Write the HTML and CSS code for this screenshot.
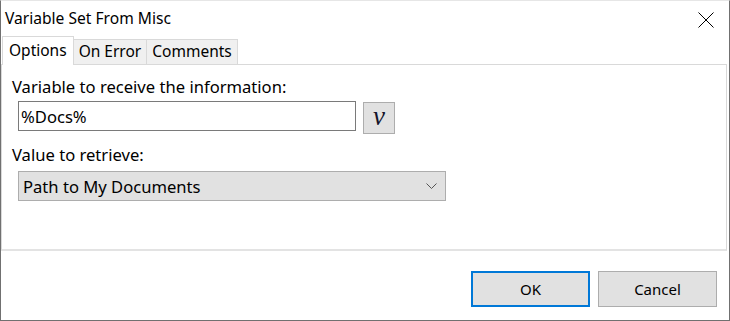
FILE: index.html
```html
<!DOCTYPE html>
<html>
	<head>
		<meta charset="UTF-8">
		<title>Variable Set From Misc</title>
		<link rel="stylesheet" href="styles.css">
	</head>
	<body>
		<div class="window flex-c">
			<header class="titlebar flex-r">
				<span class="title">Variable Set From Misc</span>
				<button class="close" type="button" aria-label="Close">
					<svg width="16" height="16" viewBox="0 0 16 16"><path d="M0.5 0.5 L15.5 15.5 M15.5 0.5 L0.5 15.5" stroke="#000" stroke-width="1" fill="none"/></svg>
				</button>
			</header>
			<nav class="tabs flex-r">
				<span class="tab active">Options</span>
				<span class="tab">On Error</span>
				<span class="tab">Comments</span>
			</nav>
			<main class="panel">
				<label class="caption" for="var">Variable to receive the information:</label>
				<div class="row flex-r">
					<input id="var" class="field" type="text" value="%Docs%">
					<button class="vbtn" type="button">v</button>
				</div>
				<label class="caption second" for="what">Value to retrieve:</label>
				<div class="select flex-r" id="what">
					<span>Path to My Documents</span>
					<svg width="11" height="6" viewBox="0 0 11 6"><path d="M0.5 0.5 L5.5 5.5 L10.5 0.5" stroke="#555" stroke-width="1" fill="none"/></svg>
				</div>
			</main>
			<footer class="buttons flex-r">
				<button class="btn default" type="button">OK</button>
				<button class="btn" type="button">Cancel</button>
			</footer>
		</div>
	</body>
</html>
```

FILE: styles.css
```css
* {
	font-family: "Noto Sans", sans-serif;
	box-sizing: border-box;
}
html, body {
	margin: 0;
	padding: 0;
	background: #fff;
}

.flex-r, .flex-c {
	display: flex;
	flex-wrap: nowrap;
}
.flex-r { flex-direction: row; }
.flex-c { flex-direction: column; }

.window {
	width: 730px;
	height: 321px;
	background: #fff;
	border: 1px solid #707070;
	border-top-color: #e6e6e6;
	color: #000;
	font-size: 15px;
}

.titlebar {
	height: 35px;
	align-items: center;
	justify-content: space-between;
	padding-left: 4px;
}
.title {
	font-size: 15.6px;
	margin-top: -2px;
}
.close {
	width: 46px;
	height: 34px;
	border: 0;
	background: none;
	padding: 0;
	display: flex;
	align-items: center;
	justify-content: center;
	margin-top: 2px;
}

.tabs {
	height: 28px;
	align-items: flex-end;
	padding-left: 1px;
	position: relative;
	z-index: 1;
	font-size: 15.5px;
}
.tab {
	height: 25px;
	line-height: 22px;
	padding: 0 5px;
	background: #f0f0f0;
	border: 1px solid #d9d9d9;
	border-left: 0;
	border-bottom: 0;
}
.tab.active {
	height: 29px;
	margin-bottom: -1px;
	background: #fff;
	border-left: 1px solid #d9d9d9;
	padding: 0 6px;
	line-height: 26px;
}

.panel {
	width: 726px;
	height: 187px;
	border: 1px solid #d9d9d9;
	border-bottom: 2px solid #e3e3e3;
	padding: 11px 0 0 10px;
	font-size: 16.6px;
}
.caption {
	display: block;
	line-height: 22px;
}
.caption.second {
	margin-top: 10px;
}
.row {
	margin: 3px 0 0 6px;
	align-items: flex-start;
}
.field {
	width: 338px;
	height: 30px;
	border: 1px solid #7a7a7a;
	padding: 0 2px;
	font-size: 16.6px;
	outline: none;
	color: #000;
}
.vbtn {
	width: 32px;
	height: 32px;
	margin: 1px 0 0 7px;
	background: #e1e1e1;
	border: 1px solid #adadad;
	font-family: "Liberation Serif", serif;
	font-style: italic;
	font-size: 27px;
	line-height: 24px;
	padding: 0 0 5px;
	color: #14142a;
}
.select {
	width: 428px;
	height: 30px;
	margin: 5px 0 0 6px;
	background: #e1e1e1;
	border: 1px solid #adadad;
	align-items: center;
	justify-content: space-between;
	padding: 0 8px 0 4px;
}

.buttons {
	justify-content: flex-end;
	gap: 8px;
	padding: 20px 12px 0 0;
}
.btn {
	width: 119px;
	height: 36px;
	background: #e1e1e1;
	border: 1px solid #adadad;
	font-size: 15px;
	color: #000;
	padding: 0;
}
.btn.default {
	border: 2px solid #0078d7;
}
```
